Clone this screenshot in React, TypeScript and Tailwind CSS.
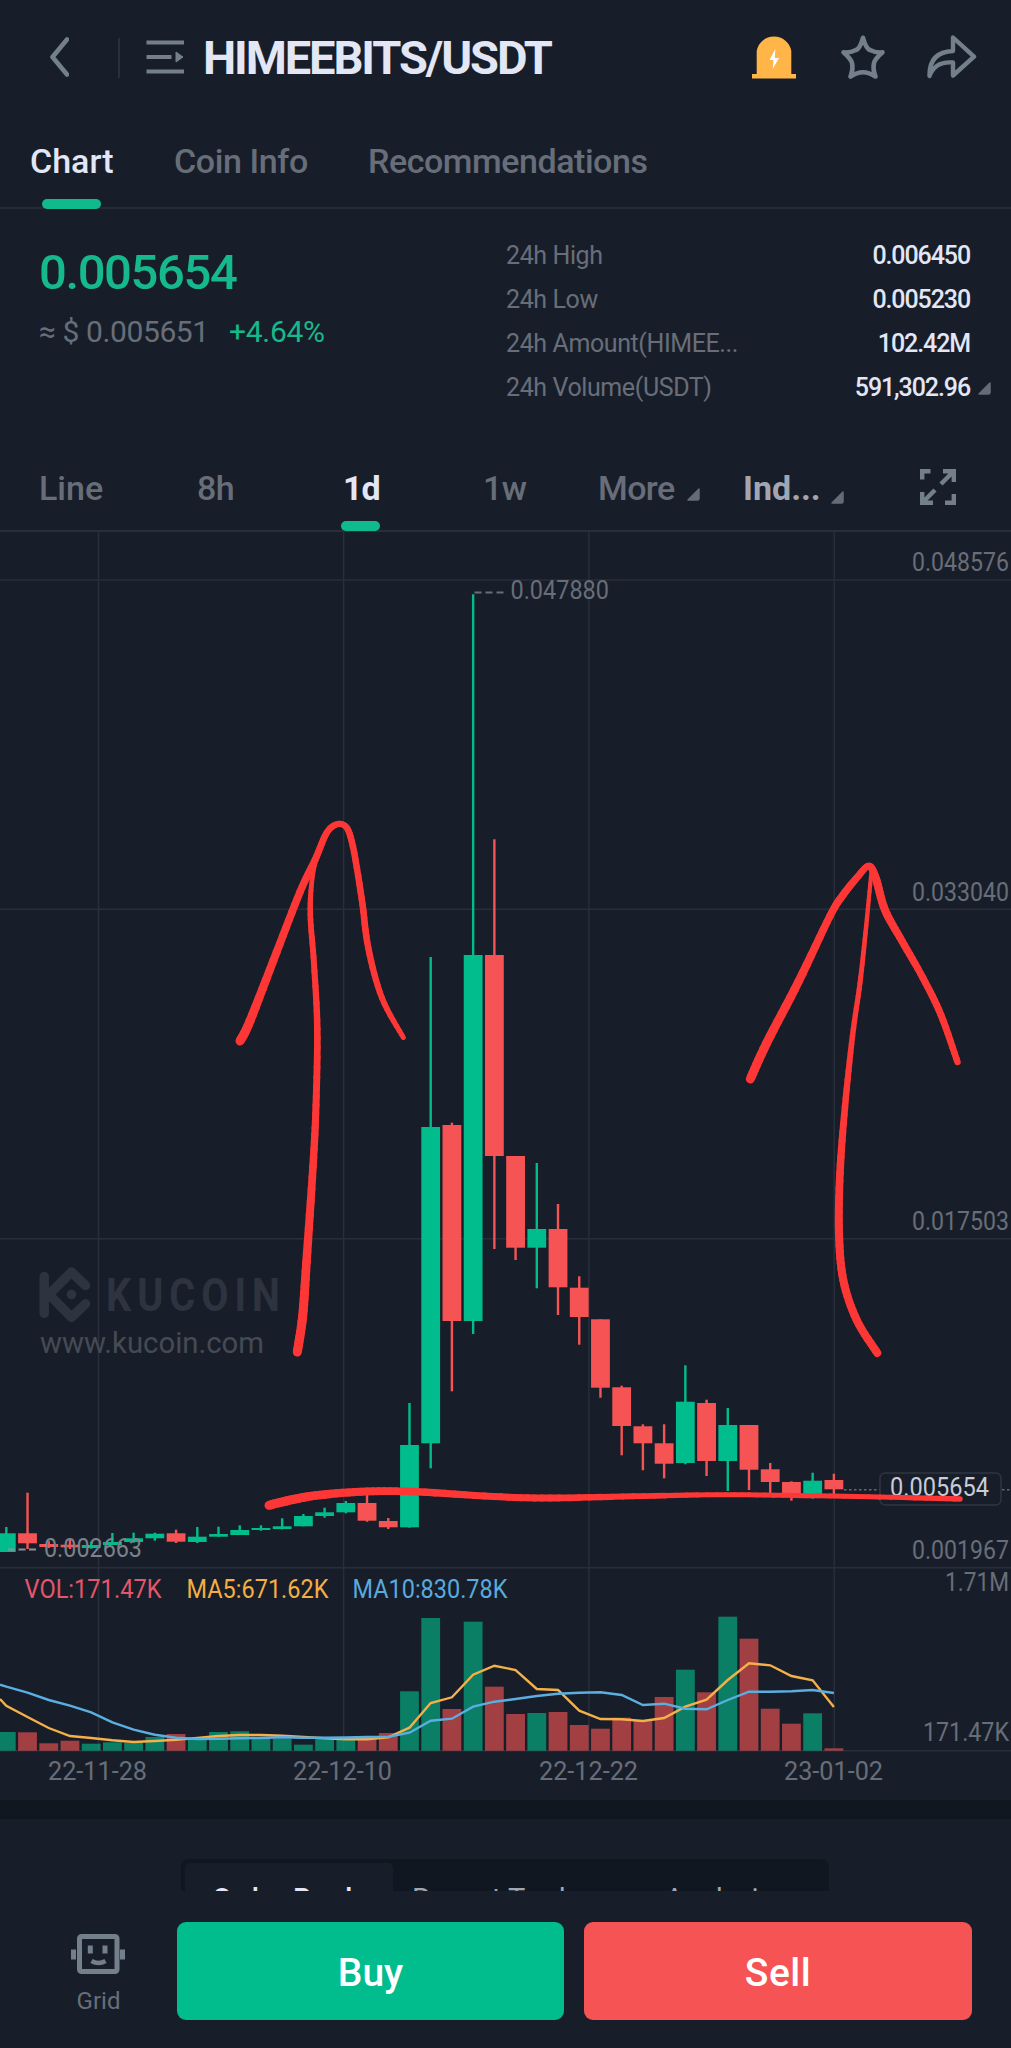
import type { ReactNode } from 'react';

type Candle = {
  up: boolean;
  high: number;
  low: number;
  top: number;
  bottom: number;
  vol: number;
};

// Rows are [up, wick top, wick bottom, body top, body bottom, volume top] in screen units.
const rows: [number, number, number, number, number, number][] = [
  [1, 1527, 1552, 1533.3, 1552, 1732],
  [0, 1492.7, 1549, 1533.3, 1543.3, 1732.3],
  [0, 1541, 1548, 1544, 1547, 1743.3],
  [0, 1539.3, 1549, 1544.7, 1547.3, 1740.7],
  [1, 1541.7, 1548.7, 1545, 1548, 1743.7],
  [1, 1533, 1545, 1542, 1545, 1742.3],
  [1, 1532.7, 1542.7, 1538.3, 1542, 1742.7],
  [1, 1532.7, 1540.7, 1533.7, 1538.3, 1737],
  [0, 1529.7, 1543, 1533.3, 1541.7, 1734],
  [1, 1527, 1543, 1536.7, 1542, 1738.7],
  [1, 1526.7, 1536.7, 1534, 1536.7, 1732],
  [1, 1525.3, 1535, 1530, 1535, 1731.3],
  [1, 1525.3, 1530.7, 1528, 1530, 1738.7],
  [1, 1518.3, 1529.3, 1526.3, 1529, 1739],
  [1, 1514, 1526.3, 1516, 1526.3, 1744.7],
  [1, 1507.7, 1517.7, 1512.3, 1516, 1738],
  [1, 1501, 1513.3, 1503, 1512.3, 1738.7],
  [0, 1495, 1521.7, 1503, 1520.7, 1738.3],
  [0, 1518, 1529, 1521, 1527.3, 1733],
  [1, 1403, 1527.7, 1445, 1527.3, 1691.3],
  [1, 957, 1468.3, 1127, 1443.3, 1618],
  [0, 1122.7, 1391.3, 1125, 1321, 1709],
  [1, 594.3, 1334, 955, 1321, 1621.7],
  [0, 839.3, 1249, 955, 1156, 1686.7],
  [0, 1156, 1260, 1156, 1247.7, 1714],
  [1, 1163, 1288.3, 1229, 1247.7, 1713],
  [0, 1204, 1315, 1229, 1287.3, 1712],
  [0, 1276.3, 1344.7, 1287.7, 1317, 1725],
  [0, 1319.3, 1397.7, 1319.3, 1387.7, 1728.7],
  [0, 1385.7, 1455.3, 1387.3, 1426, 1717.7],
  [0, 1424.3, 1470.3, 1426.3, 1443.3, 1720],
  [0, 1424.3, 1478.3, 1443.3, 1463.7, 1697],
  [1, 1365.3, 1464.3, 1401.7, 1463, 1669.7],
  [0, 1399.7, 1476, 1403, 1461, 1692.3],
  [1, 1408, 1491, 1425, 1461, 1616.7],
  [0, 1425, 1490, 1425, 1469.7, 1638.7],
  [0, 1463, 1493, 1469.3, 1482, 1708.7],
  [0, 1481.3, 1500.7, 1482, 1494, 1723.7],
  [1, 1472.7, 1498.7, 1480.7, 1494, 1713.3],
  [0, 1473.7, 1494, 1480, 1489.3, 1748.3],
];

const candles: Candle[] = rows.map(([up, high, low, top, bottom, vol]) => ({
  up: up === 1,
  high,
  low,
  top,
  bottom,
  vol,
}));

const ma5 = [
  1705.7, 1717, 1728, 1736, 1738, 1740.3, 1742, 1741, 1739.7, 1738, 1736, 1735, 1735, 1735.7, 1737, 1738.3, 1739.3,
  1739.3, 1737.3, 1727.7, 1703, 1697.3, 1674.7, 1665.7, 1670, 1689, 1690, 1710.7, 1719, 1719.3, 1721, 1718, 1706.7,
  1699.7, 1680, 1663.3, 1665.3, 1676, 1680.3, 1707,
];

const ma10 = [
  1686.7, 1692.7, 1700, 1705.7, 1712.3, 1722.3, 1729.7, 1734.7, 1737.7, 1739, 1738.7, 1738.3, 1738, 1737.3, 1737.7,
  1737.7, 1737.5, 1737, 1736.7, 1732.7, 1720.7, 1718.7, 1706.7, 1701.7, 1699, 1696, 1693.7, 1692.7, 1692.3, 1695, 1705,
  1703.7, 1708.7, 1709.3, 1700, 1691.7, 1691.7, 1691.3, 1690, 1693,
];

const cx = (i: number) => 6.3 + 21.22 * i;
const toLine = (startY: number, ys: number[]) => `0,${startY} ` + ys.map((y, i) => `${cx(i)},${y}`).join(' ');

// Pen strokes: [x, y, pen width]
type Pen = [number, number, number];

const strokes: Pen[][] = [
  [
    [240, 1041, 9], [250, 1021, 9], [276.7, 952, 8], [300, 892, 7.5], [315, 860, 7], [328.3, 830.5, 6.5],
    [342.7, 824.5, 6], [351.7, 841, 6.5], [361.7, 898.6, 6.5], [368.3, 948, 6.5], [382, 998, 6], [403.3, 1037.5, 5],
  ],
  [
    [319, 848, 4], [312.3, 878, 4.5], [310.3, 914, 5.5], [314, 963.7, 6], [317.3, 1028.8, 6.5], [316, 1105.3, 7],
    [313, 1166.5, 7.5], [306.5, 1262, 8.5], [302.7, 1315.8, 9], [297.3, 1352, 9],
  ],
  [
    [750.3, 1079, 9], [766.7, 1043, 9], [798.5, 981.7, 8.5], [830, 916, 7.5], [843, 895, 7.5], [857.5, 877, 7],
    [868.8, 866, 6.5], [875.8, 878.3, 8], [885, 910, 8], [902, 941, 7.5], [923, 978, 7], [941, 1015, 7],
    [957.5, 1062, 6.5],
  ],
  [
    [871.3, 873, 4], [865.5, 933, 4.5], [860, 983, 5], [852.5, 1036, 5.5], [845, 1106.7, 6.5], [840, 1173, 7.5],
    [839, 1233, 8], [843.3, 1280, 8], [856.7, 1320, 8], [877.3, 1353, 8],
  ],
  [
    [269, 1505.3, 9], [293, 1499.5, 9], [320, 1495, 8.5], [367, 1491.5, 8], [417, 1491.8, 7.5], [493, 1496.5, 7],
    [550, 1498, 7], [633, 1496.3, 6], [717, 1494.7, 5], [783, 1495.3, 5], [880, 1497, 5], [960, 1499, 5.5],
  ],
];

function PenStroke({ points }: { points: Pen[] }) {
  const steps = 8;
  const out: Pen[] = [];
  for (let i = 0; i < points.length - 1; i++) {
    const p0 = points[Math.max(0, i - 1)];
    const p1 = points[i];
    const p2 = points[i + 1];
    const p3 = points[Math.min(points.length - 1, i + 2)];
    for (let s = 0; s < steps; s++) {
      const t = s / steps;
      const at = (k: number) =>
        0.5 *
        (2 * p1[k] +
          (p2[k] - p0[k]) * t +
          (2 * p0[k] - 5 * p1[k] + 4 * p2[k] - p3[k]) * t * t +
          (3 * p1[k] - p0[k] - 3 * p2[k] + p3[k]) * t * t * t);
      out.push([at(0), at(1), at(2)]);
    }
  }
  out.push(points[points.length - 1]);
  return (
    <g stroke="#fc3735" strokeLinecap="round">
      {out.slice(1).map((p, i) => (
        <line key={i} x1={out[i][0]} y1={out[i][1]} x2={p[0]} y2={p[1]} strokeWidth={p[2]} />
      ))}
    </g>
  );
}

function Label({
  x,
  y,
  w,
  fill = '#686e79',
  size = 25,
  weight = 400,
  children,
}: {
  x: number;
  y: number;
  w: number;
  fill?: string;
  size?: number;
  weight?: number;
  children: ReactNode;
}) {
  return (
    <text x={x} y={y} textLength={w} lengthAdjust="spacingAndGlyphs" fill={fill} fontSize={size} fontWeight={weight}>
      {children}
    </text>
  );
}

function Chart() {
  return (
    <svg viewBox="0 532 1011 1268" className="block h-[1268px] w-full shrink-0">
      <g stroke="#292f3a" strokeWidth="1.5">
        {[98.5, 343.6, 588.9, 834.2].map((x) => (
          <line key={x} x1={x} x2={x} y1={532} y2={1750} />
        ))}
        {[580, 909.3, 1238.7, 1567.7, 1750.7].map((y) => (
          <line key={y} x1={0} x2={1011} y1={y} y2={y} />
        ))}
      </g>

      {/* watermark */}
      <g stroke="#2d333f" strokeWidth="9.5" strokeLinecap="round" strokeLinejoin="round" fill="none">
        <path d="M44.2 1276.5V1313.5" />
        <path d="M85.5 1285.5L71.5 1272L49 1294.5L71.5 1317.3L85.5 1303.8" />
      </g>
      <circle cx="71.5" cy="1294.5" r="4.8" fill="#2d333f" />
      <text transform="translate(106 1311) scale(0.86 1)" letterSpacing="7" fill="#2d333f" fontSize="46" fontWeight="700">
        KUCOIN
      </text>
      <Label x={40} y={1353} w={224} fill="#454a54" size={29}>
        www.kucoin.com
      </Label>

      {candles.map((c, i) => (
        <g key={i} fill={c.up ? '#01bc8d' : '#f65454'}>
          <rect x={cx(i) - 9.4} y={c.top} width={18.8} height={c.bottom - c.top} />
          <rect x={cx(i) - 1.2} y={c.high} width={2.4} height={c.low - c.high} />
          <rect x={cx(i) - 9.4} y={c.vol} width={18.8} height={1750.7 - c.vol} opacity={0.62} />
        </g>
      ))}

      <polyline points={toLine(1699, ma5)} fill="none" stroke="#f5b04a" strokeWidth="2.4" />
      <polyline points={toLine(1684.7, ma10)} fill="none" stroke="#5aaee0" strokeWidth="2.4" />

      <path d="M474.5 592.5H503.5" stroke="#686e79" strokeWidth="2.2" strokeDasharray="7 4" />
      <Label x={510.5} y={598.5} w={98.5}>0.047880</Label>
      <path d="M8 1549.5H37" stroke="#8b919b" strokeWidth="2.2" strokeDasharray="7 3.5" />
      <Label x={44} y={1557} w={98} fill="#7c828b">0.002663</Label>

      <Label x={912} y={571} w={97}>0.048576</Label>
      <Label x={912} y={900.5} w={97}>0.033040</Label>
      <Label x={912} y={1229.5} w={97}>0.017503</Label>
      <Label x={912} y={1558.5} w={97}>0.001967</Label>
      <Label x={945} y={1591} w={64}>1.71M</Label>
      <Label x={923} y={1741} w={86}>171.47K</Label>

      <path d="M844 1489.7H880M1002 1489.7H1011" stroke="#646a75" strokeWidth="1.5" strokeDasharray="2.5 2.5" />
      <rect x="880" y="1473" width="121" height="32" rx="5" fill="#181e29" stroke="#2e3440" strokeWidth="1.5" />
      <Label x={890} y={1496} w={99} fill="#c8ccd8">0.005654</Label>

      <Label x={24.5} y={1598} w={137} fill="#e5566a">VOL:171.47K</Label>
      <Label x={186.5} y={1598} w={142} fill="#f5ae43">MA5:671.62K</Label>
      <Label x={352.5} y={1598} w={155} fill="#59abdf">MA10:830.78K</Label>

      <Label x={48} y={1780} w={99}>22-11-28</Label>
      <Label x={293} y={1780} w={99}>22-12-10</Label>
      <Label x={539} y={1780} w={99}>22-12-22</Label>
      <Label x={784} y={1780} w={99}>23-01-02</Label>

      {strokes.map((s, i) => (
        <PenStroke key={i} points={s} />
      ))}
    </svg>
  );
}

function Corner({ className = '' }: { className?: string }) {
  return (
    <svg width="13" height="13" viewBox="0 0 13 13" className={className}>
      <path d="M12 1V10.5Q12 12 10.5 12H1Z" fill="#666c77" stroke="#666c77" strokeWidth="1.5" strokeLinejoin="round" />
    </svg>
  );
}

function Header() {
  return (
    <header className="flex h-[115px] shrink-0 items-center">
      <svg width="20" height="40" viewBox="0 0 20 40" className="ml-[49px] shrink-0 -translate-y-px">
        <path d="M18 2.5L3.5 20L18 37.5" fill="none" stroke="#747f8c" strokeWidth="4.6" strokeLinecap="round" strokeLinejoin="round" />
      </svg>
      <div className="ml-[49px] h-10 w-[2px] bg-[#2a303b]" />
      <svg width="38" height="34" viewBox="0 0 38 34" className="ml-[26px] shrink-0 -translate-y-px" fill="#747f8c">
        <path d="M0.5 0.5H38V4.5H0.5ZM0.5 15H25.5V19H0.5ZM0.5 29.5H38V33.5H0.5Z" />
        <path d="M30 12L37 17L30 22Z" stroke="#747f8c" strokeLinejoin="round" />
      </svg>
      <h1 className="ml-[19px] whitespace-nowrap text-[47px] leading-none font-bold tracking-[-2.1px] text-[#e2e6f5]">
        HIMEEBITS/USDT
      </h1>
      <div className="mr-[34px] ml-auto flex -translate-y-px items-center">
        <svg width="44" height="46" viewBox="0 0 44 46">
          <path d="M4.7 40V17A17.5 17 0 0 1 39.3 17V40H44V44.5H0V40Z" fill="#ffb548" />
          <path d="M23.3 15L17.5 26H21.5L20.7 35L27 24H22.8Z" fill="#fff" />
        </svg>
        <svg width="46" height="46" viewBox="0 0 46 46" className="ml-[44px]">
          <path
            d="M23 3.8Q26 14.5 30 16Q36 19 42.5 18.3Q35 25 34 29Q32.6 35 35.5 42.5Q29 38.3 23 38.3Q17 38.3 10.5 42.5Q13.4 35 12 29Q11 25 3.5 18.3Q10 19 16 16Q20 14.5 23 3.8Z"
            fill="none"
            stroke="#747f8c"
            strokeWidth="4.6"
            strokeLinejoin="round"
          />
        </svg>
        <svg width="50" height="46" viewBox="0 0 50 46" className="ml-[41px]">
          <path
            d="M26 3.5L47 22.7L26 41.5V28.5Q8 27 2.5 42Q2 18 26 17Z"
            fill="none"
            stroke="#747f8c"
            strokeWidth="4.4"
            strokeLinejoin="round"
          />
        </svg>
      </div>
    </header>
  );
}

function Stat({ label, value, more }: { label: string; value: string; more?: boolean }) {
  return (
    <div className="flex h-11 items-center text-[25px]">
      <span className="tracking-[-0.4px] text-[#686e79]">{label}</span>
      <span className="ml-auto font-medium tracking-[-1.1px] text-[#e2e6f5]">{value}</span>
      <span className="ml-[8px] w-[13px]">{more && <Corner />}</span>
    </div>
  );
}

export default function App() {
  return (
    <div className="flex h-[2048px] w-[1011px] flex-col overflow-hidden bg-[#181e29] font-[Roboto,sans-serif]">
      <Header />

      <nav className="flex h-[94px] shrink-0 border-b-2 border-[#252b36] text-[34px] leading-[93px] font-medium text-[#686e79]">
        <div className="relative ml-[30px] w-[84px] text-[#e2e6f5]">
          Chart
          <div className="absolute bottom-[-2px] left-3 h-[10px] w-[59px] rounded-full bg-[#0fbb8c]" />
        </div>
        <div className="ml-[60px] w-[134px] whitespace-nowrap tracking-[-0.4px]">Coin Info</div>
        <div className="ml-[60px] whitespace-nowrap tracking-[-0.45px]">Recommendations</div>
      </nav>

      <section className="flex h-[233px] shrink-0 pt-[25px]">
        <div className="ml-[39px] w-[467px] pt-[14px]">
          <div className="text-[49px] leading-[50px] font-medium tracking-[-1.4px] text-[#16b98c]">0.005654</div>
          <div className="mt-[18px] flex text-[30px] leading-[32px] whitespace-nowrap">
            <span className="w-[190px] tracking-[-0.4px] text-[#686e79]">≈ $ 0.005651</span>
            <span className="tracking-[-0.3px] text-[#16b98c]">+4.64%</span>
          </div>
        </div>
        <div className="mr-5 flex-1">
          <Stat label="24h High" value="0.006450" />
          <Stat label="24h Low" value="0.005230" />
          <Stat label="24h Amount(HIMEE..." value="102.42M" />
          <Stat label="24h Volume(USDT)" value="591,302.96" more />
        </div>
      </section>

      <nav className="flex h-[90px] shrink-0 border-b-2 border-[#292f3a] text-[34px] leading-[93px] text-[#686e79]">
        <div className="ml-[39px] w-[158px] font-medium">Line</div>
        <div className="w-[144px] font-medium tracking-[-0.5px]">8h</div>
        <div className="relative w-[142px] pl-[2px] font-bold tracking-[-1px] text-[#e2e6f5]">
          1d
          <div className="absolute bottom-[-1px] left-0 h-[10px] w-[39px] rounded-full bg-[#0fbb8c]" />
        </div>
        <div className="w-[115px] font-medium tracking-[-0.5px]">1w</div>
        <div className="relative w-[145px] font-medium tracking-[-0.6px]">
          More
          <Corner className="absolute top-[46px] left-[89px]" />
        </div>
        <div className="relative w-[177px] font-bold text-[#a1a6b3]">
          Ind...
          <Corner className="absolute top-[49px] left-[88px]" />
        </div>
        <svg width="36" height="36" viewBox="0 0 36 36" className="mt-[27px]" fill="none" stroke="#747f8c" strokeWidth="4.4">
          <path d="M2.2 10.5V2.2H10.5M33.8 25V33.8H25" />
          <path d="M23 2.2H33.8V13M33 3L21 15M2.2 23V33.8H13M3 33L15 21" />
        </svg>
      </nav>

      <Chart />

      <div className="h-[19px] shrink-0 bg-[#101720]" />

      <section className="h-[72px] shrink-0 overflow-hidden pt-[40px] pl-[181px]">
        <div className="flex h-[80px] w-[648px] rounded-[8px] bg-[#101720] p-1 text-[29px] leading-[73px] text-[#a1a6b3]">
          <div className="w-[208px] rounded-[5px] bg-[#181e29] pl-[27px] font-medium tracking-[0.3px] text-[#e2e6f5]">
            Order Book
          </div>
          <div className="w-[238px] pl-[19px]">Recent Trades</div>
          <div className="flex-1 pl-[34px]">Analysis</div>
        </div>
      </section>

      <footer className="flex flex-1 pt-[31px]">
        <div className="flex w-[177px] flex-col items-center pt-[12px] pl-[20px]">
          <svg width="56" height="40" viewBox="0 0 56 40" fill="none" stroke="#747f8c">
            <rect x="8.5" y="2.5" width="37.5" height="35" rx="2" strokeWidth="5" />
            <path d="M2.5 15.5V25.5M51.5 15.5V25.5M19.3 11.5V19.5M34 11.5V19.5" strokeWidth="5" />
            <path d="M20.5 27Q27.5 31 34.5 27" strokeWidth="4.4" />
          </svg>
          <span className="mt-[14px] text-[24px] leading-[26px] text-[#686e79]">Grid</span>
        </div>
        <button className="h-[98px] w-[387px] rounded-[9px] bg-[#01bc8d] pt-[4px] text-[39px] font-medium text-white">
          Buy
        </button>
        <button className="ml-5 h-[98px] w-[388px] rounded-[9px] bg-[#f65454] pt-[4px] text-[39px] font-medium tracking-[0.5px] text-white">
          Sell
        </button>
      </footer>
    </div>
  );
}
